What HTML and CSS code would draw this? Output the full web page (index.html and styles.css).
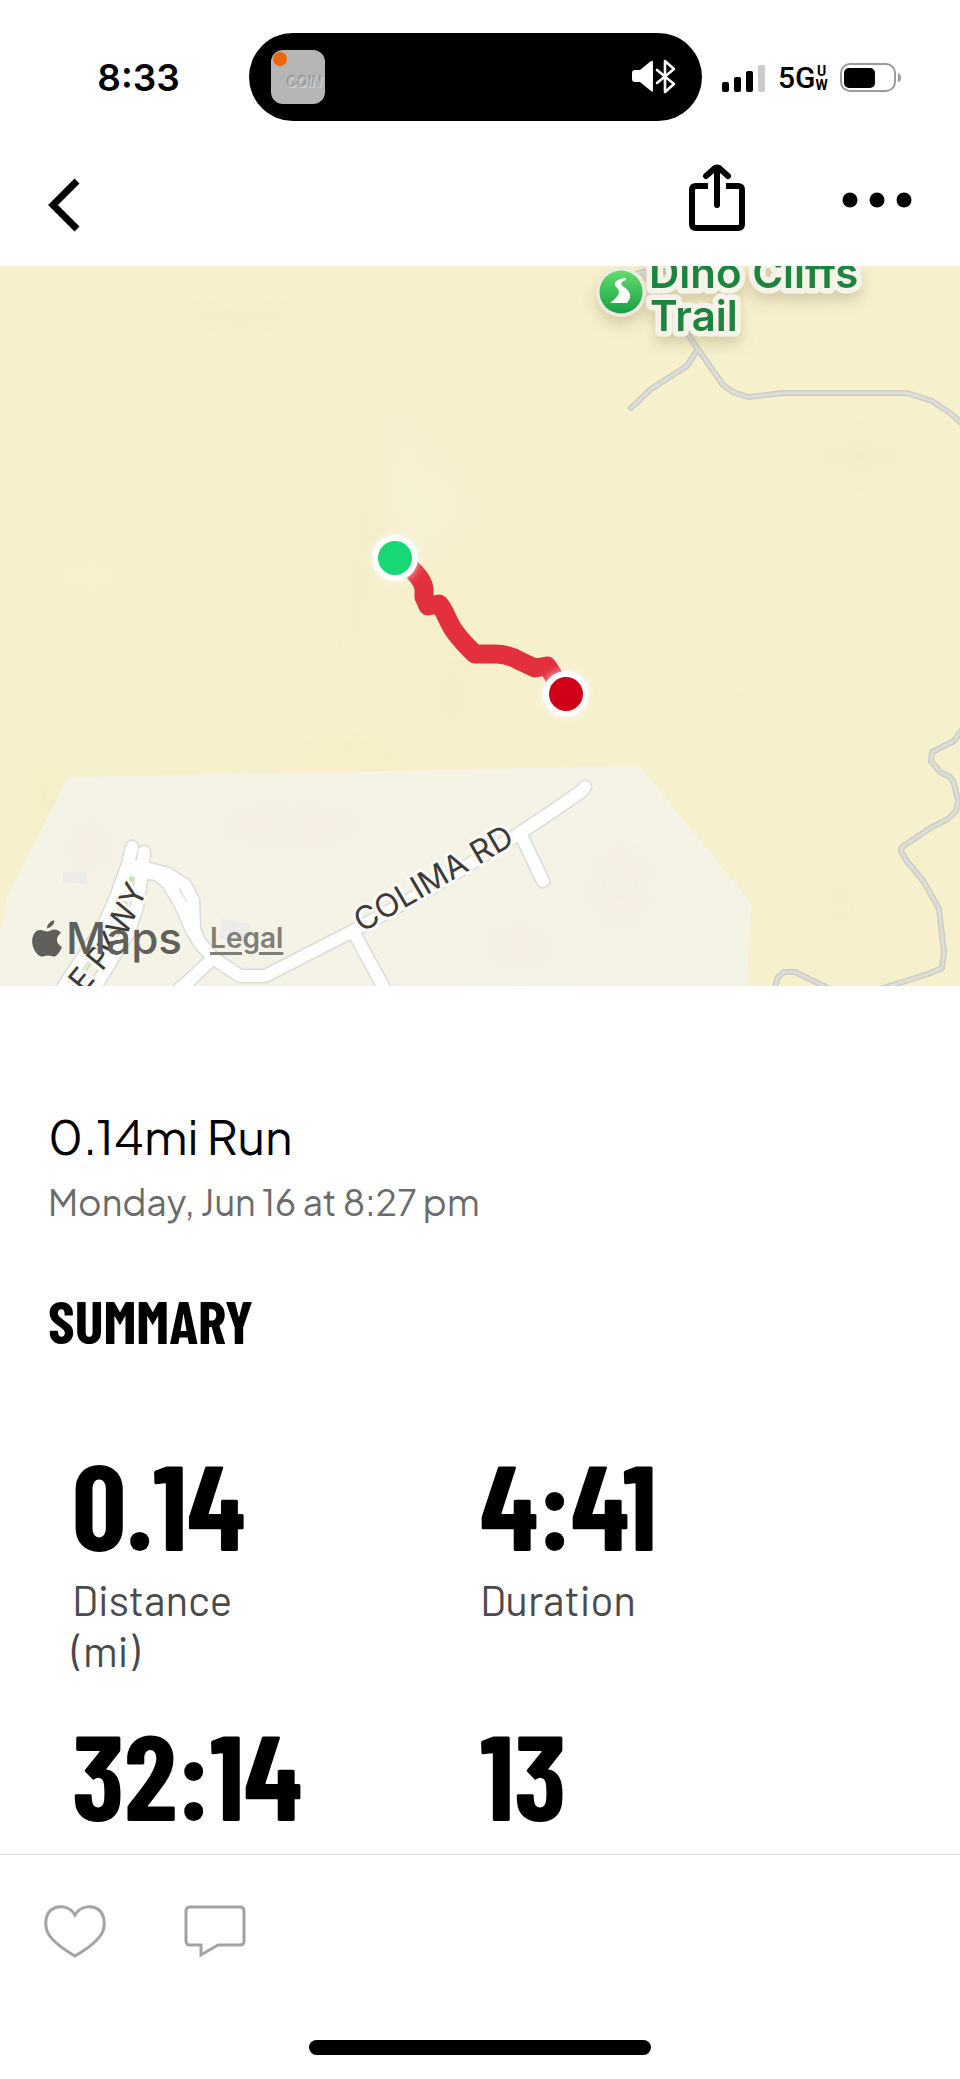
FILE: index.html
```html
<!DOCTYPE html>
<html lang="en">
<head>
<meta charset="utf-8">
<meta name="viewport" content="width=device-width, initial-scale=1">
<title>0.14mi Run</title>
<link rel="stylesheet" href="styles.css">
</head>
<body>
<div class="screen">
  <div class="status">
    <time class="status-time">8:33</time>
    <div class="island">
      <div class="app-tile"><span class="app-dot"></span><span class="app-name">COIN</span></div>
      <svg class="audio-icon" viewBox="0 0 46 36" width="46" height="36" fill="none" stroke="#fff" aria-hidden="true">
        <path d="M2 11h7L20 2q2-1 2 1v28q0 3-2 1l-11-9H4q-3 0-3-3v-6q0-3 3-3z" fill="#fff" stroke="none"/>
        <path d="M26 11L43 25 34 33V2l9 8-17 14" stroke-width="2.6" stroke-linejoin="round" stroke-linecap="round"/>
      </svg>
    </div>
    <div class="indicators">
      <svg viewBox="0 0 44 28" width="44" height="28" aria-hidden="true">
        <rect x="0" y="18" width="7" height="10" rx="2"/><rect x="12" y="13" width="7" height="15" rx="2"/><rect x="24" y="7" width="7" height="21" rx="2"/><rect x="36" y="1" width="7" height="27" rx="2" fill="#cbcbcb"/>
      </svg>
      <div class="network"><span>5G</span><span class="network-sub"><span>U</span><span>W</span></span></div>
      <svg viewBox="0 0 62 30" width="62" height="30" aria-hidden="true">
        <rect x="1" y="1" width="54" height="27" rx="9" fill="none" stroke="#9b9b9b" stroke-width="2"/>
        <rect x="4" y="5" width="31" height="20" rx="5"/>
        <path d="M58 10q3 1 3 5t-3 4z" fill="#9b9b9b"/>
      </svg>
    </div>
  </div>

  <nav class="nav">
    <button class="icon-button" type="button" aria-label="Back">
      <svg viewBox="0 0 34 56" width="34" height="56" fill="none" stroke="#000" stroke-width="7"><path d="M30 4L6 28 30 52"/></svg>
    </button>
    <div class="nav-actions">
      <button class="icon-button" type="button" aria-label="Share">
        <svg viewBox="0 0 58 68" width="58" height="68" fill="none" stroke="#000" stroke-width="6"><path d="M20 22H8q-4 0-4 4v34q0 4 4 4h42q4 0 4-4V26q0-4-4-4H38"/><path d="M29 41V4M18 12L27 4q2-1 4 0l9 8" stroke-linecap="round"/></svg>
      </button>
      <button class="icon-button" type="button" aria-label="More">
        <svg viewBox="0 0 70 68" width="70" height="68"><circle cx="8" cy="36" r="7.5"/><circle cx="35" cy="36" r="7.5"/><circle cx="62" cy="36" r="7.5"/></svg>
      </button>
    </div>
  </nav>

  <section class="map" aria-label="Route map">
    <svg class="map-canvas" viewBox="0 0 960 720" preserveAspectRatio="xMidYMid slice">
      <defs>
        <linearGradient id="pin" x1="0" y1="0" x2="0" y2="1"><stop offset="0" stop-color="#62dc6d"/><stop offset="1" stop-color="#17a045"/></linearGradient>
        <filter id="soft" x="-50%" y="-50%" width="200%" height="200%"><feGaussianBlur stdDeviation="12"/></filter>
        <filter id="drop" x="-20%" y="-20%" width="140%" height="160%"><feDropShadow dx="0" dy="8" stdDeviation="7" flood-color="#8a7f50" flood-opacity=".3"/></filter>
        <filter id="glow" x="-50%" y="-50%" width="200%" height="200%"><feGaussianBlur stdDeviation="4"/></filter>
        <path id="colima" d="M362 667L530 569"/>
        <path id="parkway" d="M84 728L120 684L152 614"/>
        <g id="roads" fill="none" stroke-linecap="round" stroke-linejoin="round">
          <path d="M132 581L128 598 115 634 102 663 60 726"/>
          <path d="M144 586L142 607 137 641 128 667 92 726"/>
          <path d="M130 604L157 608 168 617 180 637 192 664 200 677 213 692 240 710 265 710 353 665 433 621 520 567 550 547 582 525 585 521"/>
          <path d="M138 600L168 608 185 619 193 634 194 664 200 677"/>
          <path d="M353 665L385 724M213 692L190 714 176 726M520 567L543 615"/>
        </g>
        <g id="trails" fill="none" stroke-linecap="round" stroke-linejoin="round">
          <path d="M633 9L642 6 656 24 687 67 698 83 723 119 733 126 748 131 783 127 907 127 932 135 950 147 966 161M698 83L687 100 651 123 631 142M642 6L668 5"/>
          <path d="M964 461L954 475 932 486 931 495 940 506 950 511 954 517 958 535 956 545 948 553 932 561 902 581 901 585 906 594 924 616 939 643 944 686 942 702 928 708 880 723M774 724L778 711 784 706 795 706 832 724"/>
        </g>
      </defs>
      <rect width="960" height="720" fill="#f6f0cd"/>
      <g filter="url(#soft)" opacity=".7">
        <path d="M400 150L430 250 410 280 385 230z" fill="#f8f3d7"/>
        <path d="M364 170L385 160 380 300 350 450 335 390z" fill="#f3eabf" opacity=".5"/>
        <path d="M430 190L460 240 430 290z" fill="#f8f3d7"/>
        <ellipse cx="90" cy="310" rx="45" ry="18" fill="#f8f2ce"/>
        <ellipse cx="240" cy="50" rx="150" ry="18" fill="#f5edc5"/>
        <ellipse cx="860" cy="190" rx="65" ry="18" fill="#f5ecc5"/>
        <ellipse cx="350" cy="490" rx="80" ry="12" fill="#f5ecc0"/>
        <ellipse cx="45" cy="530" rx="18" ry="60" fill="#f5edc3"/>
        <ellipse cx="840" cy="640" rx="24" ry="55" fill="#f4eec7"/>
        <ellipse cx="740" cy="450" rx="25" ry="16" fill="#f5edc3"/>
        <ellipse cx="450" cy="430" rx="14" ry="32" fill="#f5eac4"/>
      </g>
      <path d="M68 511L640 500 751 637 747 720H0V667L7 631z" fill="#f5f2e6"/>
      <g filter="url(#soft)" fill="#f4efe3" opacity=".7">
        <ellipse cx="290" cy="560" rx="80" ry="30"/><ellipse cx="620" cy="620" rx="40" ry="50"/><ellipse cx="90" cy="580" rx="30" ry="35"/><ellipse cx="520" cy="680" rx="40" ry="30"/>
      </g>
      <path d="M63 606L87 606 86 618 63 616zM222 653L250 658 246 677 218 672z" fill="#ebebe9"/>
      <use href="#trails" stroke="#cdcdc3" stroke-width="6"/>
      <use href="#trails" stroke="#dddeda" stroke-width="3"/>
      <use href="#roads" stroke="#dadcda" stroke-width="15"/>
      <use href="#roads" stroke="#fff" stroke-width="12"/>
      <path d="M131 611L133 614 129 617zM125 635L127 638 123 641zM84 708L91 697" fill="#c6e8a8" stroke="#c6e8a8" stroke-width="2"/>
      <g class="road-label">
        <text><textPath href="#colima">COLIMA RD</textPath></text>
        <text><textPath href="#parkway">E PKWY</textPath></text>
      </g>
      <g filter="url(#drop)">
        <g class="place-label"><text x="649" y="22">Dino Cliffs</text><text x="650" y="65">Trail</text></g>
        <circle cx="621" cy="26" r="25" fill="#eeeadf"/>
      </g>
      <circle cx="621" cy="26" r="21.500" fill="url(#pin)"/>
      <path d="M626 12C616 13 612 17 617 22C621 26 619 30 610 37H627C632 31 631 26 624 21C620 18 620 16 626 14z" fill="#fff"/>
      <path d="M395 292L408 300Q423 313 424 323V331L428 340 439 338C445 344 448 357 455 366Q463 377 475 388H496Q508 388 520 395L535 402 547 400 555 412 566 428" fill="none" stroke="#e3303e" stroke-width="19" stroke-linejoin="round"/>
      <g fill="#fff" opacity=".75" filter="url(#glow)"><circle cx="395" cy="292" r="23"/><circle cx="566" cy="428" r="23"/></g>
      <g stroke="#fff" stroke-width="6"><circle cx="395" cy="292" r="20" fill="#18d875"/><circle cx="566" cy="428" r="20" fill="#d00019"/></g>
    </svg>
    <div class="attribution">
      <svg viewBox="0 0 30 37" width="30" height="37" fill="#605f59" aria-hidden="true"><path d="M22 0q1 6-7 8.500q0-6 7-8.500zM15 11.500c3 0 4-2 7.500-2q4 0 6.500 3.500c-6 4-5 11 1 14q-2 5-5 8c-3 3-5 .5-9 .5s-6 2.500-9 0C1 31-2 21 2 14C6 7 12 11.500 15 11.500z"/></svg>
      <span class="maps-word">Maps</span>
      <a class="legal" href="#legal">Legal</a>
    </div>
  </section>

  <main class="details">
    <h1 class="title">0.14mi Run</h1>
    <p class="date">Monday, Jun 16 at 8:27 pm</p>
    <h2 class="heading">SUMMARY</h2>
    <dl class="stats">
      <div class="stat"><dd class="value">0.14</dd><dt class="label">Distance<br>(mi)</dt></div>
      <div class="stat"><dd class="value">4:41</dd><dt class="label">Duration</dt></div>
      <div class="stat"><dd class="value">32:14</dd></div>
      <div class="stat"><dd class="value">13</dd></div>
    </dl>
  </main>

  <footer class="footer">
    <div class="reactions">
      <button class="icon-button" type="button" aria-label="Like">
        <svg viewBox="0 0 62 54" width="62" height="54" fill="none" stroke="#a3a3a3" stroke-width="3"><path d="M31 10C25 0 13 0 7 5C1 10 1 20 3 26C7 36 19 44 31 51C43 44 55 36 59 26C61 20 61 10 55 5C49 0 37 0 31 10z"/></svg>
      </button>
      <button class="icon-button" type="button" aria-label="Comment">
        <svg viewBox="0 0 62 54" width="62" height="54" fill="none" stroke="#a3a3a3" stroke-width="3"><path d="M6 2H56Q60 2 60 6V36Q60 40 56 40H34L17 50V40H6Q2 40 2 36V6Q2 2 6 2z"/></svg>
      </button>
    </div>
    <div class="home-bar"></div>
  </footer>
</div>
</body>
</html>
```
FILE: styles.css
```css
* { box-sizing: border-box; }
body { margin: 0; background: #fff; color: #000; font-family: Inter, "Liberation Sans", sans-serif; }
.screen { display: flex; flex-direction: column; min-height: 100vh; }
svg { display: block; flex: none; }
.icon-button { padding: 0; border: 0; background: none; }

.status { display: grid; grid-template-columns: 1fr 453px 1fr; align-items: center; padding: 33px 9px 0 0; }
.status-time { justify-self: center; padding: 2px 0 0 28px; font-size: 37px; line-height: 46px; font-weight: 600; }
.island { display: flex; align-items: center; justify-content: space-between; height: 88px; padding: 0 25px 0 22px; border-radius: 44px; background: #000; }
.app-tile { position: relative; display: flex; align-items: center; justify-content: flex-end; width: 54px; height: 54px; padding: 8px 3px 0 0; border-radius: 12px; background: #b6b6b6; }
.app-dot { position: absolute; top: 2px; left: 2px; width: 14px; height: 14px; border-radius: 50%; background: #ec670b; }
.app-name { font-size: 14px; font-style: italic; color: #b0b0b0; text-shadow: 1px 1px 1px #ddd, -1px -1px 1px #888; }
.indicators { display: flex; align-items: center; gap: 12px; padding: 2px 0 0 20px; }
.network { display: flex; align-items: center; font-family: Roboto, sans-serif; font-size: 30px; line-height: 36px; font-weight: 500; }
.network-sub { display: flex; flex-direction: column; align-items: center; font-size: 14px; line-height: 14px; font-weight: 700; }

.nav { display: flex; align-items: center; justify-content: space-between; height: 145px; padding: 22px 48px 0 47px; }
.nav-actions { display: flex; align-items: center; gap: 96px; padding-bottom: 14px; }

.map { position: relative; aspect-ratio: 4 / 3; overflow: hidden; }
.map-canvas { width: 100%; height: 100%; }
.road-label { font: 400 32px Inter, sans-serif; fill: #3d3b37; stroke: #fbfaf6; stroke-width: 6px; stroke-linejoin: round; paint-order: stroke; }
.place-label { font: 600 42px Inter, sans-serif; fill: #1f843d; stroke: #f5f3ea; stroke-width: 11px; stroke-linejoin: round; paint-order: stroke; }
.attribution { position: absolute; left: 32px; bottom: 20px; display: flex; align-items: center; gap: 4px; color: #605f59; }
.maps-word { font-size: 44px; line-height: 56px; font-weight: 500; }
.legal { padding-left: 24px; color: #7f7e77; font-size: 28px; line-height: 36px; font-weight: 600; text-decoration-thickness: 3px; text-underline-offset: 4px; }

.details { flex: 1; padding: 118px 48px 0; }
.title { margin: 0; font-family: "Plus Jakarta Sans", Lato, sans-serif; font-size: 48px; line-height: 64px; font-weight: 400; }
.date { margin: 0; font-family: "Plus Jakarta Sans", Lato, sans-serif; font-size: 36px; line-height: 68px; font-weight: 400; color: #6b6b6b; }
.heading { margin: 48px 0 0; font-family: "Barlow Condensed", "Roboto Condensed", "Liberation Sans Narrow", "Liberation Sans", sans-serif; font-size: 60px; line-height: 72px; font-weight: 700; }
.stats { display: grid; grid-template-columns: 1fr 1fr; row-gap: 28px; margin: 78px 0 0; padding: 0 24px; }
.stat { display: flex; flex-direction: column; gap: 2px; }
.value { margin: 0; font-family: "Barlow Condensed", "Roboto Condensed", "Liberation Sans Narrow", "Liberation Sans", sans-serif; font-size: 120px; line-height: 138px; font-weight: 700; }
.label { font-family: Barlow, Roboto, sans-serif; font-size: 42px; line-height: 51px; color: #4a4a4a; }

.footer { display: flex; flex-direction: column; align-items: center; justify-content: space-between; height: 225px; padding: 50px 44px 24px; border-top: 1px solid #dcdce3; }
.reactions { display: flex; gap: 78px; width: 100%; }
.home-bar { width: 342px; height: 15px; border-radius: 8px; background: #000; }
```
